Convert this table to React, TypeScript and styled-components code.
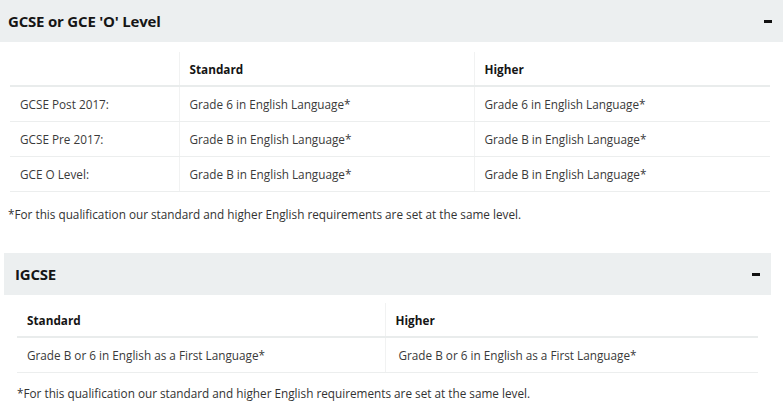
import React from "react";
import styled, { createGlobalStyle } from "styled-components";

const GlobalStyle = createGlobalStyle`
  body {
    margin: 0;
    background: #fff;
    font-family: "Open Sans", "Noto Sans", sans-serif;
    color: #333;
  }
`;

interface Row {
  label?: string;
  standard: string;
  higher: string;
}

const gcseRows: Row[] = [
  { label: "GCSE Post 2017:", standard: "Grade 6 in English Language*", higher: "Grade 6 in English Language*" },
  { label: "GCSE Pre 2017:", standard: "Grade B in English Language*", higher: "Grade B in English Language*" },
  { label: "GCE O Level:", standard: "Grade B in English Language*", higher: "Grade B in English Language*" },
];

const NOTE = "*For this qualification our standard and higher English requirements are set at the same level.";

const App = () => {
  return (
    <>
      <GlobalStyle />
      <Page>
        <Section>
          <Header>
            <Title>GCSE or GCE 'O' Level</Title>
            <Minus />
          </Header>
          <Body $inset="10px 13px 0 10px">
            <Table>
              <colgroup>
                <col style={{ width: 169 }} />
                <col style={{ width: 295 }} />
                <col />
              </colgroup>
              <thead>
                <tr>
                  <Th></Th>
                  <Th>Standard</Th>
                  <Th>Higher</Th>
                </tr>
              </thead>
              <tbody>
                {gcseRows.map((r) => (
                  <tr key={r.label}>
                    <Td>{r.label}</Td>
                    <Td>{r.standard}</Td>
                    <Td>{r.higher}</Td>
                  </tr>
                ))}
              </tbody>
            </Table>
          </Body>
          <Note $left={8}>{NOTE}</Note>
        </Section>

        <Section $narrow>
          <Header $pad={11}>
            <Title>IGCSE</Title>
            <Minus />
          </Header>
          <Body $inset="8px 13px 0 13px">
            <Table>
              <colgroup>
                <col style={{ width: 368 }} />
                <col />
              </colgroup>
              <thead>
                <tr>
                  <Th>Standard</Th>
                  <Th>Higher</Th>
                </tr>
              </thead>
              <tbody>
                <tr>
                  <Td>Grade B or 6 in English as a First Language*</Td>
                  <Td $indent={13}>Grade B or 6 in English as a First Language*</Td>
                </tr>
              </tbody>
            </Table>
          </Body>
          <Note $left={13} $top={12}>{NOTE}</Note>
        </Section>
      </Page>
    </>
  );
};

export default App;

const Page = styled.div`
  width: 783px;
  display: flex;
  flex-direction: column;
  gap: 31px;
`;

const Section = styled.section<{ $narrow?: boolean }>`
  margin: ${(p) => (p.$narrow ? "0 12px 0 4px" : "0")};
`;

const Header = styled.div<{ $pad?: number }>`
  height: 42px;
  background: #eceff0;
  display: flex;
  align-items: center;
  justify-content: space-between;
  padding: 0 11px 0 ${(p) => p.$pad ?? 8}px;
  box-sizing: border-box;
`;

const Title = styled.h2`
  margin: 0;
  font-size: 15px;
  font-weight: 700;
  color: #151515;
  letter-spacing: -0.2px;
`;

const Minus = styled.span`
  width: 8px;
  height: 3px;
  background: #111;
`;

const Body = styled.div<{ $inset: string }>`
  padding: ${(p) => p.$inset};
`;

const Table = styled.table`
  width: 100%;
  border-collapse: collapse;
  table-layout: fixed;
  font-size: 11.75px;
`;

const Th = styled.th`
  height: 33px;
  text-align: left;
  padding: 0 10px;
  font-weight: 700;
  color: #151515;
  border-bottom: 2px solid #e9ecec;
  & + & {
    border-left: 1px solid #f1f2f2;
  }
`;

const Td = styled.td<{ $indent?: number }>`
  height: 34px;
  padding: 0 10px 0 ${(p) => p.$indent ?? 10}px;
  color: #3a3a3a;
  border-bottom: 1px solid #eceeee;
  & + & {
    border-left: 1px solid #f1f2f2;
  }
`;

const Note = styled.p<{ $left: number; $top?: number }>`
  margin: ${(p) => p.$top ?? 14}px 0 0 ${(p) => p.$left}px;
  font-size: 11.75px;
  color: #333;
`;
